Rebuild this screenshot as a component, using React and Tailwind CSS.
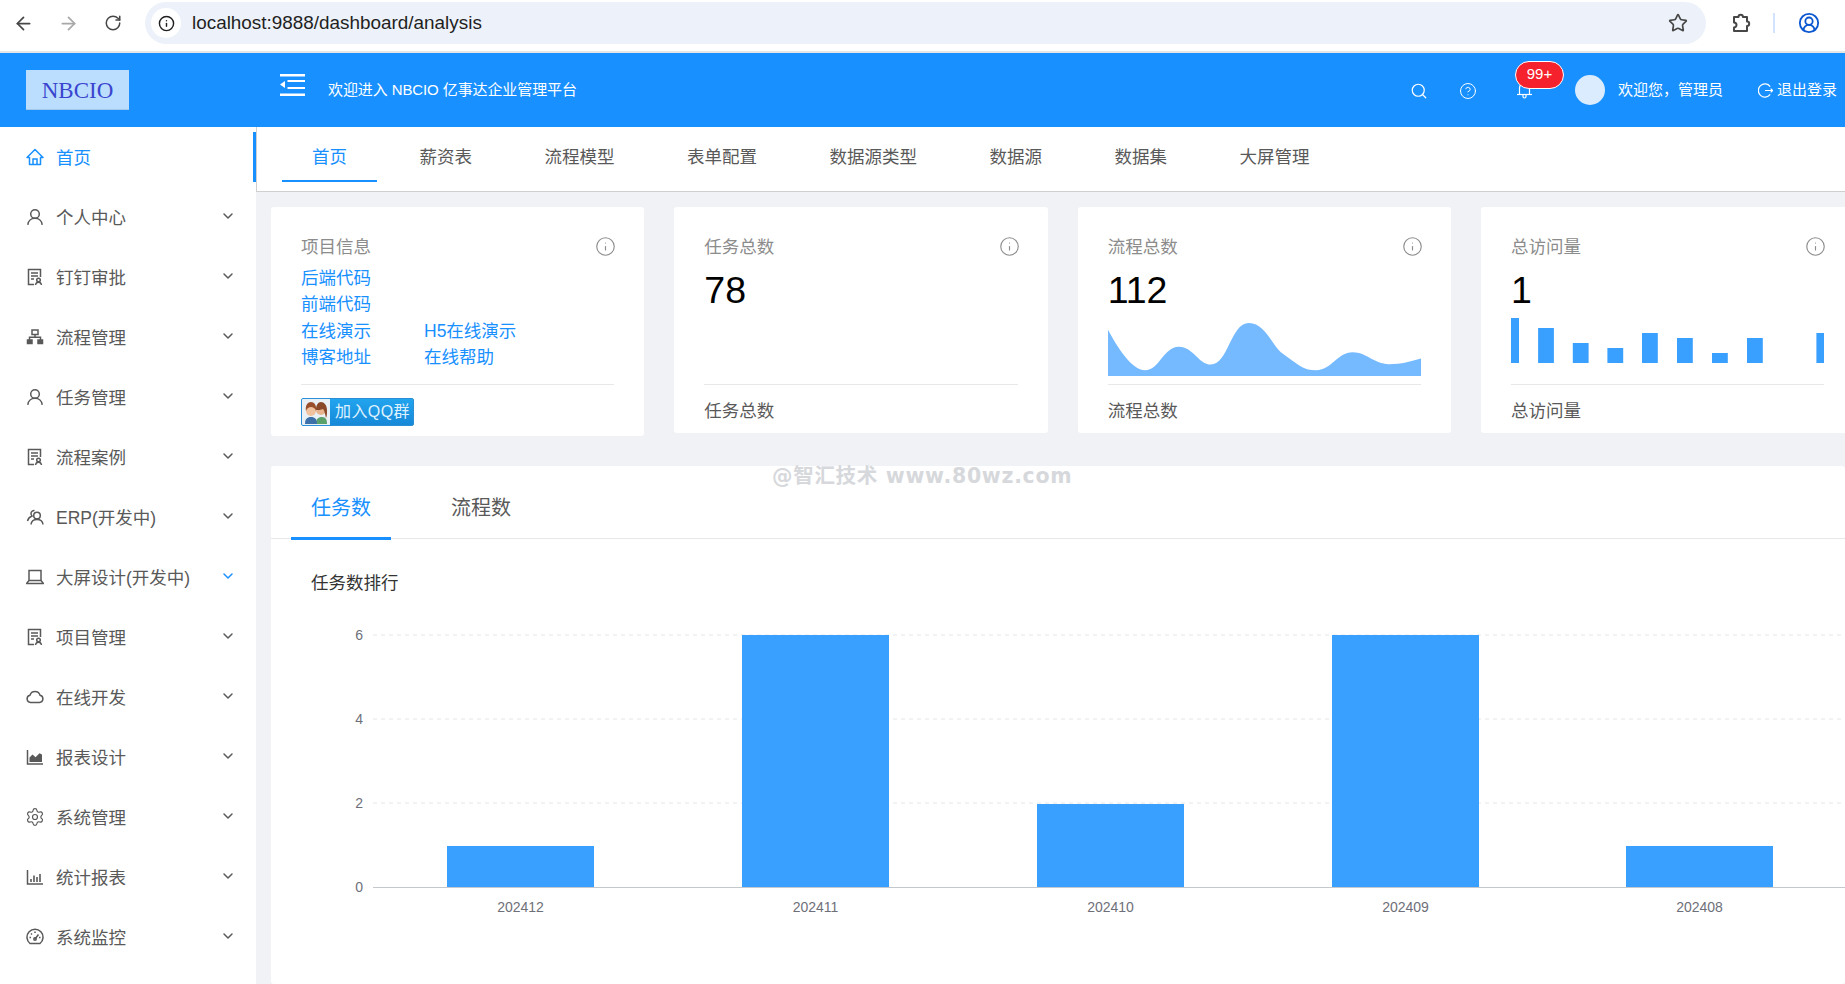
import React from "react";
import { ArrowLeft, ArrowRight, RotateCw, Info, Star, CircleUserRound, Search, CircleHelp, ChevronDown, Settings } from "lucide-react";

const Svg = ({ children }) => (
  <svg viewBox="0 0 18 18" className="h-[18px] w-[18px] shrink-0" fill="none" stroke="currentColor" strokeWidth="1.5">
    {children}
  </svg>
);

const HomeIcon = () => (
  <Svg>
    <path d="M1 9.500 9 1.500l8 8h-2.500v7h-11v-7z" strokeLinejoin="round" />
    <path d="M7 16.500V11h4v5.500" />
  </Svg>
);
const UserIcon = () => (
  <Svg>
    <circle cx="9" cy="6" r="4.300" />
    <path d="M1.800 16.800c.4-3.900 3.400-6.500 7.200-6.500s6.800 2.600 7.200 6.500" />
  </Svg>
);
const DocIcon = () => (
  <Svg>
    <path d="M8 16.500H2.500v-15h12V9" />
    <path d="M5 5h7M5 8h7M5 11h3" />
    <circle cx="12.500" cy="12" r="1.800" />
    <path d="M9.500 17c.3-1.800 1.500-2.800 3-2.800s2.700 1 3 2.800" />
  </Svg>
);
const FlowIcon = () => (
  <Svg>
    <rect x="6" y="2" width="6" height="4.500" />
    <rect x="1.500" y="12" width="4.500" height="3.500" fill="currentColor" />
    <rect x="12" y="12" width="4.500" height="3.500" fill="currentColor" />
    <path d="M3.500 12V9.300h11V12M9 6.500v2.800" />
  </Svg>
);
const TeamIcon = () => (
  <Svg>
    <circle cx="11" cy="7.500" r="3.300" />
    <path d="M5 16.500c.3-3.200 2.800-5 6-5s5.700 1.800 6 5" />
    <path d="M8.500 2.400A3.300 3.300 0 0 0 5 5.600c0 1 .4 1.800 1 2.400-2.500.9-4 2.800-4.500 5" />
  </Svg>
);
const LaptopIcon = () => (
  <Svg>
    <path d="M3 12.500V2.500h12v10" />
    <path d="M.5 15.500h17l-2.500-3H3z" strokeLinejoin="round" />
  </Svg>
);
const CloudIcon = () => (
  <Svg>
    <path d="M4.500 14.500a3.700 3.700 0 0 1-.5-7.300 5.200 5.200 0 0 1 10 0 3.700 3.700 0 0 1-.5 7.300z" strokeLinejoin="round" />
  </Svg>
);
const AreaIcon = () => (
  <Svg>
    <path d="M1.500 2v14h15.500" />
    <path d="M3.500 14V9.500l3-3 3 2.800 4-4 2.500 1.200V14z" fill="currentColor" stroke="none" />
  </Svg>
);
const BarsIcon = () => (
  <Svg>
    <path d="M1.500 2v14h15.500" />
    <path d="M5 14v-3M8 14V7.500M11 14V9M14 14V6" strokeWidth="1.600" />
  </Svg>
);
const GaugeIcon = () => (
  <Svg>
    <path d="M4 15.500a8 8 0 1 1 10 0z" />
    <path d="M9 11l3.500-4.500M3.500 9.500h1.500M13 9.500h1.500M9 3.500V5M5 5.500l1 1" />
    <circle cx="9" cy="11" r="1.200" />
  </Svg>
);

const menus = [
  { name: "个人中心", icon: <UserIcon /> },
  { name: "钉钉审批", icon: <DocIcon /> },
  { name: "流程管理", icon: <FlowIcon /> },
  { name: "任务管理", icon: <UserIcon /> },
  { name: "流程案例", icon: <DocIcon /> },
  { name: "ERP(开发中)", icon: <TeamIcon /> },
  { name: "大屏设计(开发中)", icon: <LaptopIcon />, open: true },
  { name: "项目管理", icon: <DocIcon /> },
  { name: "在线开发", icon: <CloudIcon /> },
  { name: "报表设计", icon: <AreaIcon /> },
  { name: "系统管理", icon: <Settings className="-mx-[1px] h-[20px] w-[20px]" strokeWidth={1.4} /> },
  { name: "统计报表", icon: <BarsIcon /> },
  { name: "系统监控", icon: <GaugeIcon /> },
];

const BrowserBar = () => (
  <div className="flex h-[53px] shrink-0 items-start border-b-2 border-[#e6e6e6] bg-white pl-[13px] pt-[2px]">
    <div className="flex h-[42px] items-center text-[#474747]">
      <ArrowLeft className="h-[21px] w-[21px]" strokeWidth={2} />
      <ArrowRight className="ml-[24px] h-[21px] w-[21px] text-[#a8a8a8]" strokeWidth={2} />
      <RotateCw className="ml-[25px] h-[18px] w-[18px]" strokeWidth={2} />
    </div>
    <div className="ml-[23px] flex h-[42px] w-[1561px] items-center rounded-full bg-[#edf2fa] pl-[6px] pr-[18px]">
      <div className="flex h-[30px] w-[30px] items-center justify-center rounded-full bg-white">
        <Info className="h-[17px] w-[17px] text-[#1f1f1f]" strokeWidth={2} />
      </div>
      <span className="ml-[11px] text-[18.900px] text-[#1f1f1f]">localhost:9888/dashboard/analysis</span>
      <Star className="ml-auto h-[20px] w-[20px] text-[#474747]" strokeWidth={2} />
    </div>
    <div className="flex h-[42px] items-center">
      <svg viewBox="0 0 22 22" className="ml-[25px] h-[22px] w-[22px]" fill="none" stroke="#474747" strokeWidth="2" strokeLinejoin="round">
        <path d="M3 5h4.500a2.200 2.200 0 0 1 4.400 0H16v4.500a2.200 2.200 0 0 1 0 4.400V19H3v-3.500a2.500 2.500 0 0 0 0-5z" />
      </svg>
      <div className="ml-[20px] h-[20px] w-[2px] bg-[#d3e3fd]" />
      <CircleUserRound className="ml-[23px] h-[22px] w-[22px] text-[#0b57d0]" strokeWidth={2} />
    </div>
  </div>
);

const Header = () => (
  <header className="flex h-[74px] shrink-0 items-center bg-[#1890ff] text-[15px] text-white">
    <div className="ml-[26px] flex h-[40px] w-[103px] items-center justify-center border-b border-[#a3c8ee] bg-[#bbdefe] pt-[4px] text-[23px] text-[#3a45cf] [font-family:'Liberation_Serif',serif]">
      NBCIO
    </div>
    <svg viewBox="0 0 25 22" className="mb-[10px] ml-[151px] h-[22px] w-[25px]" fill="#fff">
      <rect width="25" height="2.500" />
      <rect x="7.500" y="6" width="17.500" height="2" />
      <rect x="7.500" y="13" width="17.500" height="2" />
      <rect y="19.500" width="25" height="2.500" />
      <polygon points="0,10.500 5,7 5,14" />
    </svg>
    <span className="ml-[23px] tracking-[-0.1px]">欢迎进入 NBCIO 亿事达企业管理平台</span>
    <div className="ml-auto flex items-center pr-[8px]">
      <Search className="mt-[2px] h-[18px] w-[18px]" strokeWidth={1.6} />
      <CircleHelp className="ml-[31px] mt-[2px] h-[18px] w-[18px]" strokeWidth={1.3} />
      <div className="relative ml-[40px] h-[17px] w-[15px]">
        <svg viewBox="0 0 15 17" className="block h-[17px] w-[15px]" fill="none" stroke="#fff" strokeWidth="1.200">
          <path d="M0 12.500h15" />
          <path d="M2.500 12.500V6a5 5 0 0 1 10 0v6.500" />
          <path d="M6 13v1.500a1.500 1.500 0 0 0 3 0V13" />
        </svg>
        <span className="absolute -top-[21px] -left-[2px] flex h-[28px] w-[49px] items-center justify-center rounded-full border border-white bg-[#f5222d] text-[15px]">
          99+
        </span>
      </div>
      <div className="ml-[43px] h-[30px] w-[30px] rounded-full bg-[#dbecff]" />
      <span className="ml-[13px]">欢迎您，管理员</span>
      <svg viewBox="0 0 16 16" className="ml-[35px] h-[15px] w-[15px]" fill="none" stroke="#fff" strokeWidth="1.300">
        <path d="M13 3.800A7 7 0 1 0 13 12.200" />
        <path d="M7.500 8h8M13.500 6l2 2-2 2" />
      </svg>
      <span className="ml-[4px]">退出登录</span>
    </div>
  </header>
);

const Sidebar = () => (
  <aside className="flex w-[256px] shrink-0 flex-col gap-[10px] bg-white pt-[5px] text-[17.500px] text-[#595959]">
    <div className="flex h-[50px] items-center border-r-[3px] border-[#1890ff] pl-[26px] text-[#1890ff]">
      <HomeIcon />
      <span className="ml-[12px] mt-[2px]">首页</span>
    </div>
    {menus.map((m) => (
      <div key={m.name} className="flex h-[50px] items-center pl-[26px] pr-[20px]">
        {m.icon}
        <span className="ml-[12px] mt-[2px]">{m.name}</span>
        <ChevronDown className={`ml-auto mb-[2px] h-[16px] w-[16px] ${m.open ? "text-[#1890ff]" : "text-[#595959]"}`} strokeWidth={2.200} />
      </div>
    ))}
  </aside>
);

const tabs = ["薪资表", "流程模型", "表单配置", "数据源类型", "数据源", "数据集", "大屏管理"];

const TabBar = () => (
  <div className="flex h-[65px] shrink-0 items-center gap-[72.500px] border-b border-l border-[#cfcfcf] bg-white pb-[4px] pl-[55px] text-[17.500px] text-[#595959]">
    <span className="relative text-[#1890ff]">
      首页
      <span className="absolute -left-[30px] -right-[30px] top-[36px] h-[2px] bg-[#1890ff]" />
    </span>
    {tabs.map((t) => (
      <span key={t}>{t}</span>
    ))}
  </div>
);

const QQButton = () => (
  <div className="mt-[13px] flex h-[28px] w-[113px] overflow-hidden rounded-[2px] border border-[#2a8fd6] bg-gradient-to-b from-[#22a4ee] to-[#1689d8]">
    <div className="flex w-[28px] items-center justify-center bg-[#e9f1f6]">
      <svg viewBox="0 0 24 24" className="h-[24px] w-[24px]">
        <path d="M12 24c0-5 2-7 6-7s5 3 5 7z" fill="#5aa06a" />
        <circle cx="17" cy="10" r="5" fill="#e6b48e" />
        <path d="M12 10c0-5 2-8 5-8s6 3 6 8c0 4 0 6-1 8-1-3-1-7-3-9-2 1-5 1-7 1z" fill="#8a4a2a" />
        <path d="M1 24c0-5 2-7 6-7s6 2 6 7z" fill="#3d6fa8" />
        <circle cx="7" cy="11" r="5" fill="#f0c29e" />
        <path d="M2 11c-1-6 2-9 5-9s6 3 5 9c-1-3-3-4-5-4s-4 1-5 4z" fill="#9a4f2c" />
      </svg>
    </div>
    <span className="ml-[5px] text-[16px] leading-[26px] tracking-[0.4px] text-[#dff2ff]">加入QQ群</span>
  </div>
);

const CardTitle = ({ title }) => (
  <div className="flex h-[26px] items-center justify-between text-[#8c8c8c]">
    <span>{title}</span>
    <Info className="-mr-[2px] mb-[2px] h-[21px] w-[21px]" strokeWidth={1.3} />
  </div>
);

const ProjectCard = () => (
  <div className="h-[229px] w-[373.330px] shrink-0 rounded-[3px] bg-white px-[30px] pt-[27px]">
    <CardTitle title="项目信息" />
    <div className="grid h-[125px] grid-cols-[123px_1fr] content-start border-b border-[#e8e8e8] pt-[5px] leading-[26.300px] text-[#1890ff]">
      <span className="col-span-2">后端代码</span>
      <span className="col-span-2">前端代码</span>
      <span>在线演示</span>
      <span>H5在线演示</span>
      <span>博客地址</span>
      <span>在线帮助</span>
    </div>
    <QQButton />
  </div>
);

const StatCard = ({ title, value, children }) => (
  <div className="h-[226px] w-[373.330px] shrink-0 rounded-[3px] bg-white px-[30px] pt-[27px]">
    <CardTitle title={title} />
    <div className="h-[58px] text-[37.500px] leading-[60px] text-black">{value}</div>
    <div className="h-[67px] border-b border-[#e8e8e8]">{children}</div>
    <div className="flex h-[52px] items-center text-[#595959]">{title}</div>
  </div>
);

const AreaChart = () => (
  <div className="pt-[5px]">
    <svg viewBox="77 370 633 157" preserveAspectRatio="none" className="block h-[53px] w-[313px]">
      <path
        d="M77,390 C95,440 125,510 152,510 C180,510 190,440 220,440 C250,440 260,493 285,493 C320,493 325,370 362,370 C395,370 410,440 430,460 C460,490 470,510 498,510 C530,510 540,457 572,457 C600,457 615,492 645,492 C670,492 690,483 710,475 L710,527 L77,527 Z"
        fill="#75b9ff"
      />
    </svg>
  </div>
);

const miniBars = [[0, 8, 45], [27.100, 15.800, 35], [61.800, 15.800, 20], [96.400, 15.800, 15], [131, 15.800, 30], [166, 15.800, 25], [201, 15.800, 10], [236, 15.800, 25], [305.400, 8, 30]];

const MiniBars = () => (
  <svg viewBox="0 0 313 45" className="block h-[45px] w-[313px]">
    {miniBars.map(([x, w, h]) => (
      <rect key={x} x={x} y={45 - h} width={w} height={h} fill="#3aa0ff" />
    ))}
  </svg>
);

const yTicks = [[6, 635], [4, 719], [2, 803]];
const bars = [["202412", 447, 846], ["202411", 742, 635], ["202410", 1037, 804], ["202409", 1332, 635], ["202408", 1626, 846]];

const BarChart = () => (
  <svg viewBox="271 620 1574 364" className="block h-[364px] w-[1574px]" fontSize="14" fill="#6e7079">
    {yTicks.map(([v, y]) => (
      <g key={v}>
        <line x1="373" x2="1845" y1={y} y2={y} stroke="#e4e6ea" strokeDasharray="4 4" />
        <text x="363" y={y + 5} textAnchor="end">{v}</text>
      </g>
    ))}
    <text x="363" y="892" textAnchor="end">0</text>
    {bars.map(([label, x, y]) => (
      <g key={label}>
        <rect x={x} y={y} width="147" height={888 - y} fill="#3aa0ff" />
        <text x={x + 73.500} y="912" textAnchor="middle">{label}</text>
      </g>
    ))}
    <line x1="373" x2="1845" y1="887.500" y2="887.500" stroke="#c4c7cc" />
  </svg>
);

const ChartCard = () => (
  <div className="mt-[30px] w-[1574px] flex-1 rounded-[3px] bg-white">
    <div className="flex h-[73px] border-b border-[#e8e8e8] pl-[20px] text-[20px]">
      <div className="flex h-[74px] w-[100px] items-center justify-center border-b-[3px] border-[#1890ff] pt-[13px] text-[#1890ff]">
        任务数
      </div>
      <div className="ml-[60px] flex h-[71px] items-center pt-[13px] text-[#595959]">流程数</div>
    </div>
    <div className="flex h-[81px] items-start pl-[40px] pt-[31px] leading-[26px] text-[#333]">任务数排行</div>
    <BarChart />
  </div>
);

export default function App() {
  return (
    <div className="relative flex h-screen w-screen flex-col overflow-hidden bg-[#f0f2f5] [font-family:'Liberation_Sans','Noto_Sans_CJK_SC',sans-serif]">
      <BrowserBar />
      <Header />
      <div className="flex min-h-0 flex-1">
        <Sidebar />
        <main className="flex min-w-0 flex-1 flex-col">
          <TabBar />
          <div className="flex min-h-0 flex-1 flex-col pl-[15px] pt-[15px] text-[17.500px]">
            <div className="flex items-start gap-[30px]">
              <ProjectCard />
              <StatCard title="任务总数" value="78" />
              <StatCard title="流程总数" value="112">
                <AreaChart />
              </StatCard>
              <StatCard title="总访问量" value="1">
                <MiniBars />
              </StatCard>
            </div>
            <ChartCard />
          </div>
        </main>
      </div>
      <span className="absolute left-[772px] top-[461px] text-[20.500px] font-bold tracking-[0.7px] text-[#d6d8dc] [font-family:'DejaVu_Sans','Noto_Sans_CJK_SC',sans-serif]">
        @智汇技术 www.80wz.com
      </span>
    </div>
  );
}
